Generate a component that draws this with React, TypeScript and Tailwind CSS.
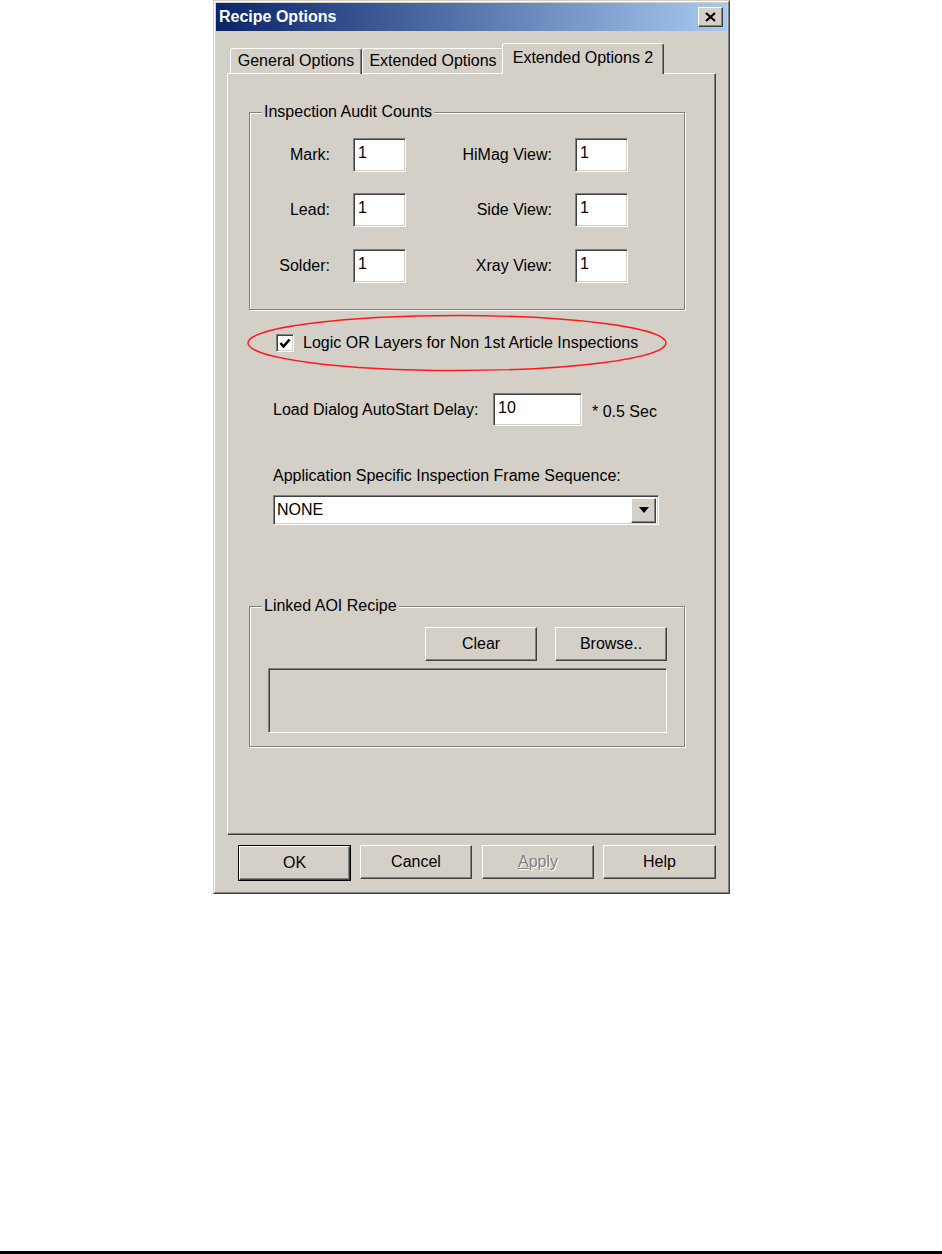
import React from "react";

const raised =
  "bg-[#d4d0c8] border border-t-white border-l-white border-r-[#404040] border-b-[#404040] shadow-[inset_-1px_-1px_0_#808080]";
const sunken =
  "bg-white border border-t-[#808080] border-l-[#808080] border-r-white border-b-white shadow-[inset_1px_1px_0_#404040,inset_-1px_-1px_0_#d4d0c8]";
const etched =
  "border border-[#808080] shadow-[1px_1px_0_#fff,inset_1px_1px_0_#fff]";

function Field({ value, w = "w-[53px]", h = "h-[34px]" }: { value: string; w?: string; h?: string }) {
  return (
    <div className={`${sunken} ${w} ${h} pl-[4px] pt-[5px] text-[16px] leading-[18px] text-black`}>
      {value}
    </div>
  );
}

function Btn({ children, className = "" }: { children: React.ReactNode; className?: string }) {
  return (
    <div className={`${raised} h-[34px] flex items-center justify-center text-[16px] text-black ${className}`}>
      {children}
    </div>
  );
}

function AuditRow({ l, r, mt }: { l: string; r: string; mt: string }) {
  return (
    <div className={`flex items-center ${mt}`}>
      <div className="w-[80px] text-right text-[16px] leading-[18px]">{l}</div>
      <div className="ml-[23px]">
        <Field value="1" />
      </div>
      <div className="w-[146px] text-right text-[16px] leading-[18px]">{r}</div>
      <div className="ml-[23px]">
        <Field value="1" />
      </div>
    </div>
  );
}

export default function App() {
  return (
    <div className="w-[942px] h-[1254px] bg-white flex flex-col font-['Liberation_Sans',Arial,sans-serif] text-black">
      {/* Dialog */}
      <div className="ml-[213px] w-[517px] h-[894px] bg-[#d4d0c8] border border-t-[#d4d0c8] border-l-[#d4d0c8] border-r-[#404040] border-b-[#404040]">
        <div className="h-full border border-t-white border-l-white border-r-[#808080] border-b-[#808080] p-[1px] flex flex-col">
          {/* Title bar */}
          <div className="h-[28px] flex items-center justify-between pl-[3px] pr-[4px] bg-[linear-gradient(90deg,#0a246a,#a6caf0)]">
            <span className="text-white font-bold text-[16px] leading-[18px]">Recipe Options</span>
            <div className={`${raised} w-[25px] h-[20px] flex items-center justify-center`}>
              <svg width="11" height="10" viewBox="0 0 11 10">
                <path d="M1 1 L10 9 M10 1 L1 9" stroke="#000" strokeWidth="2.2" />
              </svg>
            </div>
          </div>

          {/* Body */}
          <div className="px-[11px] flex flex-col">
            {/* Tabs */}
            <div className="mt-[12px] h-[31px] -mb-[1px] flex items-end relative z-10">
              <div className="ml-[3px] w-[132px] h-[26px] border-t border-l border-r border-t-white border-l-white border-r-[#404040] rounded-t-[3px] shadow-[inset_-1px_0_0_#808080] flex items-center justify-center text-[16px] leading-[18px] pb-[1px]">
                General Options
              </div>
              <div className="w-[142px] h-[26px] border-t border-l border-r border-t-white border-l-white border-r-[#404040] rounded-t-[3px] shadow-[inset_-1px_0_0_#808080] flex items-center justify-center text-[16px] leading-[18px] pb-[1px]">
                Extended Options
              </div>
              <div className="-ml-[2px] w-[162px] h-[31px] bg-[#d4d0c8] border-t border-l border-r border-t-white border-l-white border-r-[#404040] rounded-t-[3px] shadow-[inset_-1px_0_0_#808080] flex items-start justify-center pt-[5px] text-[16px] leading-[18px]">
                Extended Options 2
              </div>
            </div>

            {/* Panel */}
            <div className="relative h-[762px] border border-t-white border-l-white border-r-[#404040] border-b-[#404040] shadow-[inset_-1px_-1px_0_#808080] flex flex-col">
              {/* Group 1 */}
              <div className={`relative ml-[21px] mt-[38px] w-[436px] h-[198px] ${etched}`}>
                <div className="absolute -top-[10px] left-[12px] px-[2px] bg-[#d4d0c8] text-[16px] leading-[18px]">
                  Inspection Audit Counts
                </div>
                <AuditRow l="Mark:" r="HiMag View:" mt="mt-[25px]" />
                <AuditRow l="Lead:" r="Side View:" mt="mt-[21px]" />
                <AuditRow l="Solder:" r="Xray View:" mt="mt-[22px]" />
              </div>

              {/* Checkbox row */}
              <div className="mt-[24px] ml-[48px] h-[18px] flex items-center">
                <div className={`${sunken} w-[18px] h-[18px] flex items-center justify-center`}>
                  <svg width="12" height="11" viewBox="0 0 12 11">
                    <path d="M1.5 5 L4.5 8.5 L10.5 1.5" fill="none" stroke="#000" strokeWidth="2.6" />
                  </svg>
                </div>
                <span className="ml-[9px] text-[16px] leading-[18px]">
                  Logic OR Layers for Non 1st Article Inspections
                </span>
              </div>

              {/* Red annotation ellipse */}
              <svg
                className="absolute left-[18px] top-[240px] pointer-events-none"
                width="422"
                height="60"
                viewBox="0 0 422 60"
              >
                <ellipse cx="211" cy="29" rx="209" ry="27.5" fill="none" stroke="#ff1a1a" strokeWidth="1.4" />
              </svg>

              {/* Load Dialog row */}
              <div className="mt-[41px] ml-[45px] flex items-center">
                <div className="w-[220px] text-[16px] leading-[18px]">Load Dialog AutoStart Delay:</div>
                <Field value="10" w="w-[89px]" h="h-[33px]" />
                <div className="ml-[10px] mt-[4px] text-[16px] leading-[18px]">* 0.5 Sec</div>
              </div>

              {/* Application sequence */}
              <div className="mt-[41px] ml-[45px] text-[16px] leading-[18px]">
                Application Specific Inspection Frame Sequence:
              </div>
              <div className={`mt-[10px] ml-[45px] w-[386px] h-[30px] ${sunken} flex items-center justify-between pl-[3px] pr-[2px]`}>
                <span className="text-[16px] leading-[18px]">NONE</span>
                <div className={`${raised} w-[25px] h-[25px] flex items-center justify-center`}>
                  <svg width="10" height="6" viewBox="0 0 10 6">
                    <path d="M0 0 H10 L5 6 Z" fill="#000" />
                  </svg>
                </div>
              </div>

              {/* Group 2 */}
              <div className={`relative ml-[21px] mt-[81px] w-[436px] h-[141px] ${etched}`}>
                <div className="absolute -top-[10px] left-[12px] px-[2px] bg-[#d4d0c8] text-[16px] leading-[18px]">
                  Linked AOI Recipe
                </div>
                <div className="mt-[20px] ml-[175px] flex">
                  <Btn className="w-[112px]">Clear</Btn>
                  <Btn className="ml-[18px] w-[112px]">Browse..</Btn>
                </div>
                <div className="mt-[7px] ml-[18px] w-[399px] h-[65px] border border-t-[#808080] border-l-[#808080] border-r-white border-b-white shadow-[inset_1px_1px_0_#404040]" />
              </div>
            </div>

            {/* Bottom buttons */}
            <div className="mt-[10px] ml-[11px] flex">
              <div className="border border-black">
                <Btn className="w-[111px] h-[32px]">OK</Btn>
              </div>
              <Btn className="ml-[9px] w-[112px]">Cancel</Btn>
              <Btn className="ml-[10px] w-[112px] text-[#808080] [text-shadow:1px_1px_0_#fff]">
                <span className="text-[#808080]">
                  <span className="underline">A</span>pply
                </span>
              </Btn>
              <Btn className="ml-[9px] w-[113px]">Help</Btn>
            </div>
          </div>
        </div>
      </div>

      <div className="flex-1" />
      <div className="h-[3px] bg-black" />
    </div>
  );
}
